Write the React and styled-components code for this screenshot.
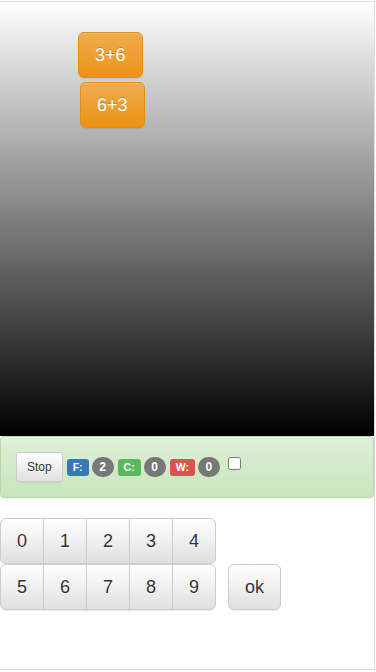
import React from "react";
import styled, { createGlobalStyle } from "styled-components";

const Global = createGlobalStyle`
  html, body { margin: 0; padding: 0; background: #fff; }
  body { font-family: "Liberation Sans", Arial, Helvetica, sans-serif; font-size: 14px; color: #333; }
  * { box-sizing: border-box; }
`;

const Frame = styled.div`
  margin-top: 1px;
  width: 375px;
  height: 669px;
  border: 1px solid #ddd;
  border-left: 0;
`;

const Stage = styled.div`
  position: relative;
  height: 434px;
  background: linear-gradient(to bottom, #ffffff 0%, #000000 100%);
  overflow: hidden;
`;

const Falling = styled.button`
  position: absolute;
  left: ${(p) => p.$x}px;
  top: ${(p) => p.$y}px;
  height: 46px;
  padding: 10px 16px;
  font-family: inherit;
  font-size: 18px;
  line-height: 24px;
  color: #fff;
  text-shadow: 0 -1px 0 rgba(0, 0, 0, 0.2);
  background: linear-gradient(to bottom, #f0ad4e 0%, #eb9316 100%);
  border: 1px solid #e38d13;
  border-radius: 6px;
  box-shadow: inset 0 1px 0 rgba(255, 255, 255, 0.15), 0 1px 1px rgba(0, 0, 0, 0.075);
`;

const Alert = styled.div`
  display: flex;
  align-items: center;
  height: 62px;
  padding: 15px;
  margin-bottom: 20px;
  border: 1px solid #b2dba1;
  border-radius: 4px;
  background: linear-gradient(to bottom, #dff0d8 0%, #c8e5bc 100%);
  box-shadow: inset 0 1px 0 rgba(255, 255, 255, 0.25), 0 1px 2px rgba(0, 0, 0, 0.05);
`;

const SmallButton = styled.button`
  height: 30px;
  padding: 5px 10px;
  font-family: inherit;
  font-size: 12px;
  line-height: 18px;
  color: #333;
  text-shadow: 0 1px 0 #fff;
  background: linear-gradient(to bottom, #fff 0%, #e0e0e0 100%);
  border: 1px solid #ccc;
  border-radius: 3px;
  box-shadow: inset 0 1px 0 rgba(255, 255, 255, 0.15), 0 1px 1px rgba(0, 0, 0, 0.075);
  margin-right: 4px;
`;

const Label = styled.span`
  display: inline-block;
  height: 17px;
  padding: 3px 6px 3px;
  font-size: 10.5px;
  font-weight: bold;
  line-height: 11px;
  color: #fff;
  border-radius: 3px;
  background: ${(p) => p.$bg};
  margin-right: 3px;
  margin-left: ${(p) => p.$ml || 0}px;
`;

const Badge = styled.span`
  display: inline-block;
  min-width: 22px;
  height: 20px;
  padding: 3px 7px;
  font-size: 12px;
  font-weight: bold;
  line-height: 14px;
  color: #fff;
  text-align: center;
  border-radius: 10px;
  background: #777;
`;

const Check = styled.input`
  width: 13px;
  height: 13px;
  margin: -8px 0 0 8px;
`;

const Row = styled.div`
  display: flex;
  align-items: flex-start;
`;

const Group = styled.div`
  display: flex;
`;

const Key = styled.button`
  width: ${(p) => p.$w || 44}px;
  height: 46px;
  padding: 10px 0;
  font-family: inherit;
  font-size: 18px;
  line-height: 24px;
  color: #333;
  text-shadow: 0 1px 0 #fff;
  background: linear-gradient(to bottom, #fff 0%, #e0e0e0 100%);
  border: 1px solid #ccc;
  border-radius: 0;
  box-shadow: inset 0 1px 0 rgba(255, 255, 255, 0.15), 0 1px 1px rgba(0, 0, 0, 0.075);
  & + & { margin-left: -1px; }
  &:first-child { border-radius: 6px 0 0 6px; }
  &:last-child { border-radius: 0 6px 6px 0; }
`;

const OkKey = styled(Key)`
  margin-left: 12px;
  border-radius: 6px;
  &:first-child, &:last-child { border-radius: 6px; }
`;

export default function App() {
  const row1 = ["0", "1", "2", "3", "4"];
  const row2 = ["5", "6", "7", "8", "9"];
  return (
    <>
      <Global />
      <Frame>
        <Stage>
          <Falling $x={78} $y={30}>3+6</Falling>
          <Falling $x={80} $y={80}>6+3</Falling>
        </Stage>
        <Alert>
          <SmallButton>Stop</SmallButton>
          <Label $bg="#337ab7">F:</Label>
          <Badge>2</Badge>
          <Label $bg="#5cb85c" $ml={4}>C:</Label>
          <Badge>0</Badge>
          <Label $bg="#d9534f" $ml={4}>W:</Label>
          <Badge>0</Badge>
          <Check type="checkbox" />
        </Alert>
        <Row>
          <Group>
            {row1.map((d) => (
              <Key key={d}>{d}</Key>
            ))}
          </Group>
        </Row>
        <Row>
          <Group>
            {row2.map((d) => (
              <Key key={d}>{d}</Key>
            ))}
          </Group>
          <OkKey $w={53}>ok</OkKey>
        </Row>
      </Frame>
    </>
  );
}
